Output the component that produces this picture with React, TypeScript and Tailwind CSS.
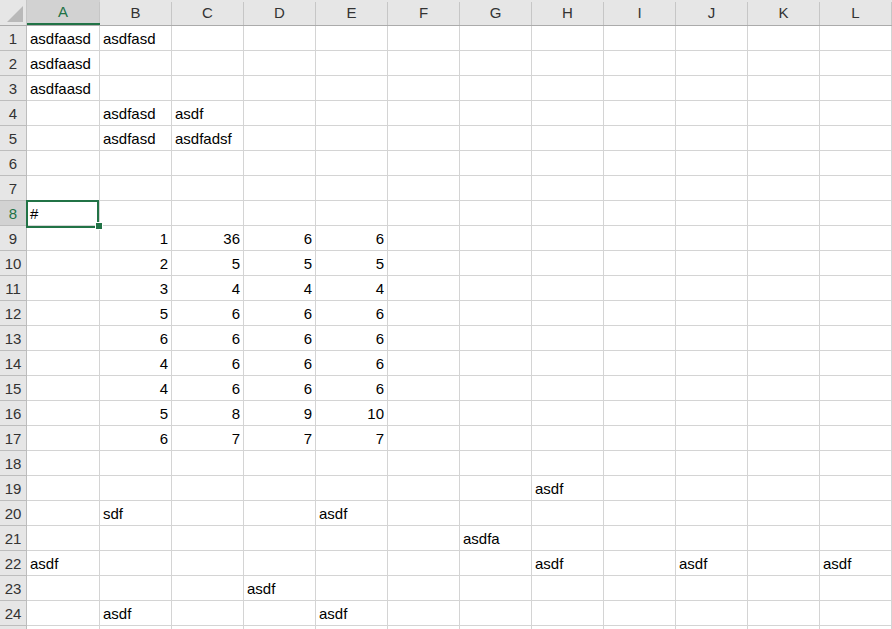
import React from "react";

const cols = ["A", "B", "C", "D", "E", "F", "G", "H", "I", "J", "K", "L"];

type Cell = string | number;
// row number -> column letter -> value
const data: Record<number, Record<string, Cell>> = {
  1: { A: "asdfaasd", B: "asdfasd" },
  2: { A: "asdfaasd" },
  3: { A: "asdfaasd" },
  4: { B: "asdfasd", C: "asdf" },
  5: { B: "asdfasd", C: "asdfadsf" },
  8: { A: "#" },
  9: { B: 1, C: 36, D: 6, E: 6 },
  10: { B: 2, C: 5, D: 5, E: 5 },
  11: { B: 3, C: 4, D: 4, E: 4 },
  12: { B: 5, C: 6, D: 6, E: 6 },
  13: { B: 6, C: 6, D: 6, E: 6 },
  14: { B: 4, C: 6, D: 6, E: 6 },
  15: { B: 4, C: 6, D: 6, E: 6 },
  16: { B: 5, C: 8, D: 9, E: 10 },
  17: { B: 6, C: 7, D: 7, E: 7 },
  19: { H: "asdf" },
  20: { B: "sdf", E: "asdf" },
  21: { G: "asdfa" },
  22: { A: "asdf", H: "asdf", J: "asdf", L: "asdf" },
  23: { D: "asdf" },
  24: { B: "asdf", E: "asdf" },
};

const rows = Array.from({ length: 25 }, (_, i) => i + 1);

export default function App() {
  return (
    <div
      className="relative w-[892px] h-[629px] overflow-hidden bg-white text-[15px] text-black"
      style={{ fontFamily: '"Liberation Sans", Arial, sans-serif' }}
    >
      {/* column headers */}
      <div className="flex h-[26px] bg-[#e6e6e6] border-b border-[#ababab]">
        <div className="w-[27px] shrink-0 border-r border-[#c6c6c6] flex items-end justify-end pr-[3px] pb-[3px]">
          <svg width="16" height="16" viewBox="0 0 16 16">
            <polygon points="0,16 16,16 16,0" fill="#b9b9b9" />
          </svg>
        </div>
        {cols.map((c) => (
          <div
            key={c}
            className={`${c === "A" ? "w-[73px] bg-[#d2d2d2] text-[#217346] border-b-2 border-b-[#217346]" : "w-[72px] text-[#333]"} shrink-0 flex items-stretch`}
          >
            <div className="flex-1 flex items-center justify-center pt-[1px]">{c}</div>
            <div className="w-px mt-[2px] bg-[#c6c6c6]" />
          </div>
        ))}
      </div>

      {rows.map((r) => (
        <div key={r} className="flex h-[25px]">
          <div
            className={`w-[27px] shrink-0 border-r border-b border-[#bdbdbd] flex items-center justify-center pt-[2px] ${r === 8 ? "bg-[#d2d2d2] text-[#217346]" : "bg-[#e6e6e6] text-[#333]"}`}
          >
            {r < 25 ? r : ""}
          </div>
          {cols.map((c) => {
            const v = data[r]?.[c];
            const isNum = typeof v === "number";
            return (
              <div
                key={c}
                className={`${c === "A" ? "w-[73px]" : "w-[72px]"} shrink-0 border-r border-b border-[#d4d4d4] flex items-center px-[3px] pt-[2px] whitespace-nowrap ${isNum ? "justify-end" : "justify-start"}`}
              >
                {v}
              </div>
            );
          })}
        </div>
      ))}

      {/* active cell A8 */}
      <div className="absolute left-[26px] top-[200px] w-[73px] h-[28px] border-2 border-[#217346]" />
      <div className="absolute left-[96px] top-[223px] w-[6px] h-[6px] bg-[#217346] outline outline-1 outline-white" />
    </div>
  );
}
